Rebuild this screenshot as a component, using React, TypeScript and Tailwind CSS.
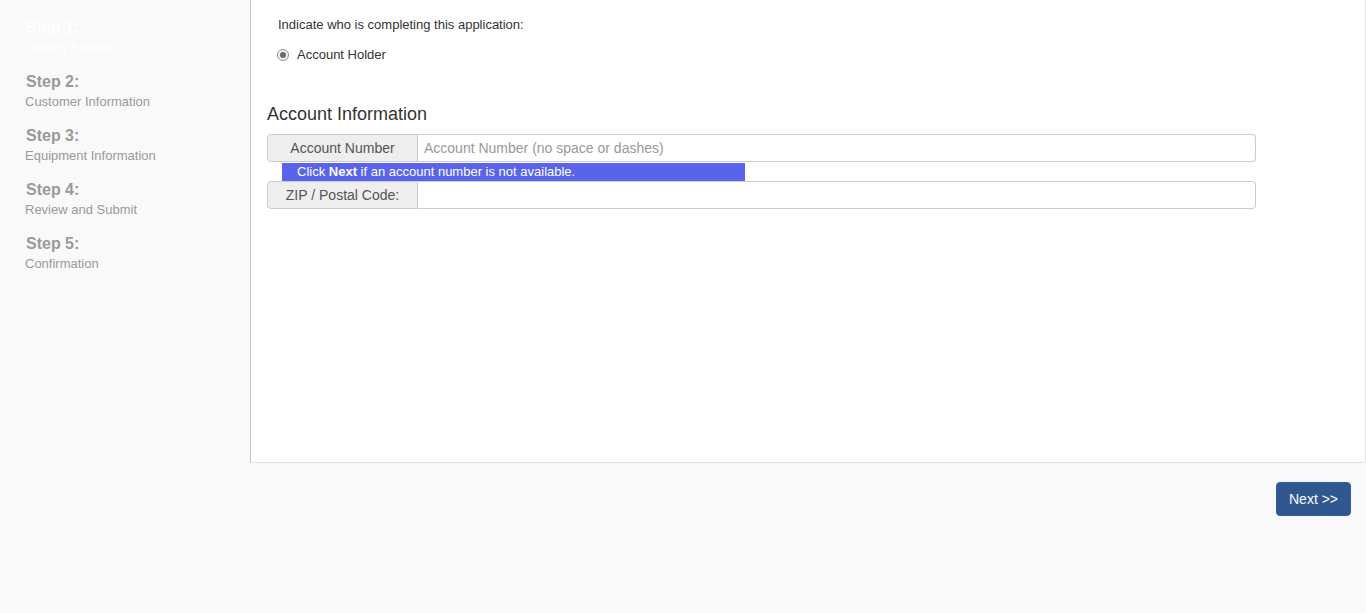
import React from 'react';

const steps = [
    { label: 'Step 1:', title: 'Getting Started', active: true },
    { label: 'Step 2:', title: 'Customer Information' },
    { label: 'Step 3:', title: 'Equipment Information' },
    { label: 'Step 4:', title: 'Review and Submit' },
    { label: 'Step 5:', title: 'Confirmation' },
];

export default function App() {
    return (
        <div className="min-h-[613px] bg-[#f9f9f9] font-['Liberation_Sans',Arial,sans-serif] text-[#333]">
            <div className="flex">
                <aside className="w-[250px] shrink-0 pl-[25px] pt-[17px]">
                    {steps.map((s) => (
                        <div key={s.label} className="mb-[14px]">
                            <div className={`pl-px text-[16px] font-bold leading-[22px] ${s.active ? 'text-white' : 'text-[#999]'}`}>{s.label}</div>
                            <div className={`text-[13px] leading-[18px] ${s.active ? 'text-white' : 'text-[#999]'}`}>{s.title}</div>
                        </div>
                    ))}
                </aside>
                <main className="h-[463px] flex-1 rounded-br-[4px] border-b border-l border-r border-b-[#e3e3e3] border-l-[#c4c4c4] border-r-[#e3e3e3] bg-white pl-[16px] pr-[109px]">
                    <p className="pl-[11px] pt-[17px] text-[13px] leading-[16px] text-[#333]">Indicate who is completing this application:</p>
                    <label className="mt-[14px] flex items-center pl-[10px] text-[13px] leading-[16px]">
                        <span className="mr-[8px] flex h-[12px] w-[12px] items-center justify-center rounded-full border border-[#8f8f8f] bg-[#f3f3f3]">
                            <span className="h-[6px] w-[6px] rounded-full bg-[#6b6b6b]" />
                        </span>
                        Account Holder
                    </label>
                    <h2 className="mt-[40px] text-[18px] leading-[22px] text-[#333]">Account Information</h2>
                    <div className="mt-[9px] flex h-[28px] text-[14px]">
                        <span className="flex w-[151px] items-center justify-center rounded-l-[4px] border border-[#ccc] bg-[#eee] text-[#555]">Account Number</span>
                        <input
                            className="flex-1 rounded-r-[4px] border border-l-0 border-[#ccc] px-[6px] text-[14px] text-[#555] outline-none placeholder:text-[#999]"
                            placeholder="Account Number (no space or dashes)"
                        />
                    </div>
                    <div className="ml-[15px] mt-px h-[18px] w-[463px] bg-[#5964ea] pl-[15px] text-[13px] leading-[18px] text-white">
                        Click <b>Next</b> if an account number is not available.
                    </div>
                    <div className="flex h-[28px] text-[14px]">
                        <span className="flex w-[151px] items-center justify-center rounded-l-[4px] border border-[#ccc] bg-[#eee] text-[#555]">ZIP / Postal Code:</span>
                        <input className="flex-1 rounded-r-[4px] border border-l-0 border-[#ccc] px-[6px] outline-none" />
                    </div>
                </main>
            </div>
            <div className="flex justify-end pr-[15px] pt-[19px]">
                <button className="h-[34px] w-[75px] rounded-[4px] border border-[#2e5fa0] bg-[#30578f] text-[14px] text-white">Next &gt;&gt;</button>
            </div>
        </div>
    );
}
